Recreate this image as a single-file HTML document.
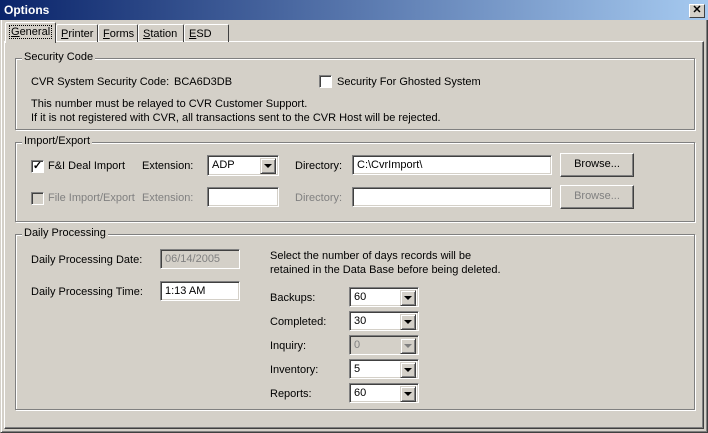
<!DOCTYPE html>
<html><head><style>
*{box-sizing:border-box}
body{margin:0;width:708px;height:433px;background:#d4d0c8;font:11px "Liberation Sans",sans-serif;color:#000;position:relative;overflow:hidden}
.a{position:absolute;white-space:nowrap}
.win{position:absolute;left:0;top:0;width:708px;height:433px;border:1px solid;border-color:#d4d0c8 #404040 #404040 #d4d0c8;box-shadow:inset 1px 1px #fff,inset -1px -1px #808080}
.title{position:absolute;left:0;top:0;width:708px;height:20px;background:linear-gradient(90deg,#0a246a,#a6caf0);color:#fff;font-weight:bold;font-size:12px;padding:3px 4px}
.close{position:absolute;left:689px;top:4px;width:16px;height:14px;background:#d4d0c8;border:1px solid;border-color:#fff #404040 #404040 #fff;font:bold 11px "Liberation Sans";text-align:center;line-height:11px}
.panel{position:absolute;left:4px;top:41px;width:700px;height:388px;border:1px solid;border-color:#fff #404040 #404040 #fff;box-shadow:inset -1px -1px #808080}
.tab{position:absolute;top:24px;height:18px;border:1px solid;border-bottom:none;border-color:#fff #404040 #404040 #fff;padding:3px 4px 0;border-radius:2px 2px 0 0}
.grp{position:absolute;border:1px solid #808080;box-shadow:1px 1px #fff,inset 1px 1px #fff}
.grp>span{position:absolute;top:-8px;left:6px;background:#d4d0c8;padding:0 2px}
.in{position:absolute;background:#fff;border:1px solid;border-color:#808080 #fff #fff #808080;box-shadow:inset 1px 1px #404040,inset -1px -1px #d4d0c8;padding:3px 4px;height:20px}
.dis{background:#d4d0c8;color:#808080}
.arr{position:absolute;right:2px;top:2px;width:16px;height:16px;background:#d4d0c8;border:1px solid;border-color:#d4d0c8 #404040 #404040 #d4d0c8;box-shadow:inset 1px 1px #fff,inset -1px -1px #808080}
.arr:after{content:"";position:absolute;left:3px;top:5px;border:4px solid transparent;border-top:4px solid #000;border-bottom:none}
.arr.g:after{border-top-color:#808080}
.btn{position:absolute;width:74px;height:24px;border:1px solid;border-color:#fff #404040 #404040 #fff;box-shadow:inset -1px -1px #808080;text-align:center;line-height:21px}
.cb{position:absolute;width:13px;height:13px;background:#fff;border:1px solid;border-color:#808080 #fff #fff #808080;box-shadow:inset 1px 1px #404040}
.g{color:#808080}
</style></head><body>
<div class="win"></div>
<div class="title">Options</div>
<div class="close">✕</div>
<div class="panel"></div>
<div class="tab" style="left:5px;top:22px;height:21px;width:51px;background:#d4d0c8;z-index:2"><span style="outline:1px dotted #000;padding:0 1px"><u>G</u>eneral</span></div>
<div class="tab" style="left:56px;width:42px"><u>P</u>rinter</div>
<div class="tab" style="left:98px;width:40px"><u>F</u>orms</div>
<div class="tab" style="left:138px;width:46px"><u>S</u>tation</div>
<div class="tab" style="left:184px;width:45px"><u>E</u>SD</div>

<div class="grp" style="left:15px;top:58px;width:680px;height:72px"><span>Security Code</span></div>
<div class="a" style="left:31px;top:76px">CVR System Security Code:</div>
<div class="a" style="left:174px;top:76px">BCA6D3DB</div>
<div class="cb" style="left:319px;top:75px"></div>
<div class="a" style="left:337px;top:76px">Security For Ghosted System</div>
<div class="a" style="left:31px;top:98px">This number must be relayed to CVR Customer Support.</div>
<div class="a" style="left:31px;top:112px">If it is not registered with CVR, all transactions sent to the CVR Host will be rejected.</div>

<div class="grp" style="left:15px;top:142px;width:680px;height:80px"><span>Import/Export</span></div>
<div class="cb" style="left:31px;top:160px;font:bold 11px sans-serif;line-height:10px;text-align:center">✓</div>
<div class="a" style="left:48px;top:160px">F&amp;I Deal Import</div>
<div class="a" style="left:142px;top:160px">Extension:</div>
<div class="in" style="left:207px;top:155px;width:72px;height:21px">ADP<div class="arr"></div></div>
<div class="a" style="left:295px;top:160px">Directory:</div>
<div class="in" style="left:352px;top:155px;width:200px">C:\CvrImport\</div>
<div class="btn" style="left:560px;top:153px">Browse...</div>
<div class="cb" style="left:31px;top:192px;background:#d4d0c8"></div>
<div class="a g" style="left:48px;top:192px">File Import/Export</div>
<div class="a g" style="left:142px;top:192px">Extension:</div>
<div class="in" style="left:207px;top:187px;width:72px"></div>
<div class="a g" style="left:295px;top:192px">Directory:</div>
<div class="in" style="left:352px;top:187px;width:200px"></div>
<div class="btn g" style="left:560px;top:185px">Browse...</div>

<div class="grp" style="left:15px;top:234px;width:680px;height:176px"><span>Daily Processing</span></div>
<div class="a" style="left:31px;top:254px">Daily Processing Date:</div>
<div class="in dis" style="left:160px;top:249px;width:80px">06/14/2005</div>
<div class="a" style="left:31px;top:286px">Daily Processing Time:</div>
<div class="in" style="left:160px;top:281px;width:80px">1:13 AM</div>
<div class="a" style="left:270px;top:250px">Select the number of days records will be</div>
<div class="a" style="left:270px;top:264px">retained in the Data Base before being deleted.</div>
<div class="a" style="left:270px;top:292px">Backups:</div>
<div class="in" style="left:349px;top:287px;width:70px">60<div class="arr"></div></div>
<div class="a" style="left:270px;top:316px">Completed:</div>
<div class="in" style="left:349px;top:311px;width:70px">30<div class="arr"></div></div>
<div class="a" style="left:270px;top:340px">Inquiry:</div>
<div class="in dis" style="left:349px;top:335px;width:70px">0<div class="arr g"></div></div>
<div class="a" style="left:270px;top:364px">Inventory:</div>
<div class="in" style="left:349px;top:359px;width:70px">5<div class="arr"></div></div>
<div class="a" style="left:270px;top:388px">Reports:</div>
<div class="in" style="left:349px;top:383px;width:70px">60<div class="arr"></div></div>
</body></html>
